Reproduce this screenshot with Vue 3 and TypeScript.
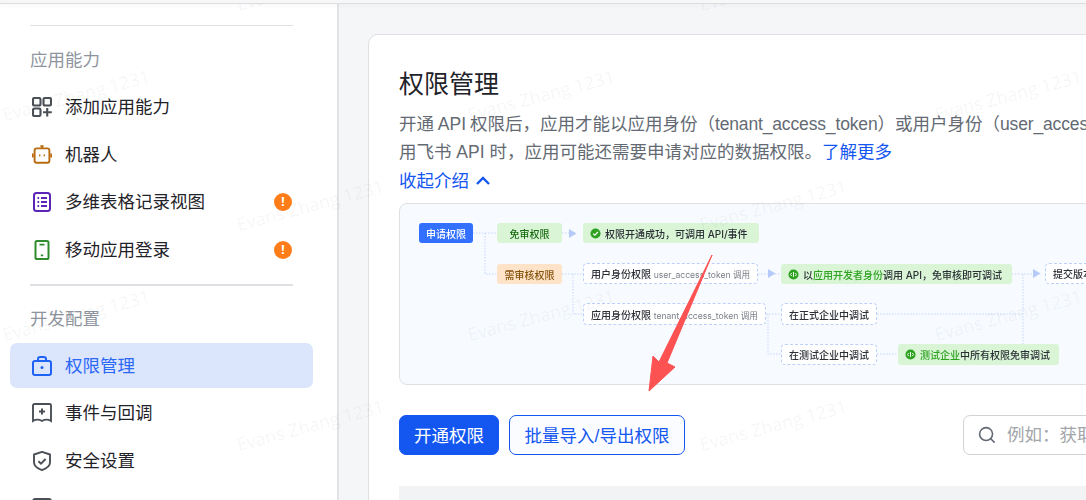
<script setup lang="ts">
interface Seg { t: string; c?: string }
interface DNode { x: number; y: number; w: number; h: number; cls: string; icon?: string; segs: Seg[] }

const wmarks: [number, number][] = [
  [76, 95], [541, 95], [1008, 95], [310, 205], [773, 205], [76, 315], [541, 315], [1008, 315],
  [310, 425], [773, 425], [773, -15], [310, -15],
]

function wmStyle(p: [number, number]) {
  return { left: `${p[0] - 90}px`, top: `${p[1] - 12}px` }
}

const nodes: DNode[] = [
  { x: 19, y: 19, w: 54, h: 20, cls: 'blue', segs: [{ t: '申请权限' }] },
  { x: 97, y: 19, w: 65, h: 20, cls: 'green center', segs: [{ t: '免审权限', c: 'dgreen' }] },
  { x: 183, y: 19, w: 176, h: 20, cls: 'green', icon: 'check', segs: [{ t: '权限开通成功，可调用 API/事件' }] },
  { x: 97, y: 60, w: 65, h: 20, cls: 'orange', segs: [{ t: '需审核权限' }] },
  { x: 183, y: 59, w: 175, h: 21, cls: 'dash', segs: [{ t: '用户身份权限 ' }, { t: 'user_access_token 调用', c: 'small' }] },
  { x: 183, y: 99, w: 183, h: 22, cls: 'dash', segs: [{ t: '应用身份权限 ' }, { t: 'tenant_access_token 调用', c: 'small' }] },
  { x: 381, y: 60, w: 231, h: 20, cls: 'green', icon: 'code', segs: [{ t: '以' }, { t: '应用开发者身份', c: 'lgreen' }, { t: '调用 API，免审核即可调试' }] },
  { x: 645, y: 59, w: 90, h: 21, cls: 'dash', segs: [{ t: '提交版本' }] },
  { x: 381, y: 99, w: 96, h: 22, cls: 'dash center', segs: [{ t: '在正式企业中调试' }] },
  { x: 381, y: 140, w: 96, h: 21, cls: 'dash center', segs: [{ t: '在测试企业中调试' }] },
  { x: 498, y: 140, w: 161, h: 21, cls: 'green', icon: 'code', segs: [{ t: '测试企业', c: 'lgreen' }, { t: '中所有权限免审调试' }] },
]

function nodeStyle(n: DNode) {
  return { left: `${n.x}px`, top: `${n.y}px`, width: `${n.w}px`, height: `${n.h}px` }
}

const lines: string[] = [
  'M73 29H97', 'M85 29V70H97', 'M162 29H169', 'M162 70H183', 'M173 70V110H183',
  'M358 70H368', 'M375 70H381', 'M366 110H381', 'M368 110V150H381', 'M612 70H633',
  'M477 110H623', 'M623 70V140', 'M477 150H498',
]
const triangles: [number, number][] = [[169, 25], [368, 65], [633, 65]]
</script>

<template>
  <div class="page">
    <div class="topbar"></div>
    <div class="body">
      <aside class="side">
        <div class="rule"></div>
        <div class="label first">应用能力</div>
        <div class="item">
          <svg class="ic" viewBox="0 0 20 20" fill="none" stroke="#4b5057" stroke-width="2.1">
            <rect x="1" y="1" width="7.5" height="7.5" rx="1.5" /><rect x="11.5" y="1" width="7.5" height="7.5" rx="1.5" />
            <rect x="1" y="11.5" width="7.5" height="7.5" rx="1.5" /><path d="M15.2 11v8.5M11 15.2h8.800" />
          </svg>
          <span>添加应用能力</span>
        </div>
        <div class="item">
          <svg class="ic" viewBox="0 0 20 20" fill="none" stroke="#b96b10" stroke-width="1.9">
            <rect x="2.6" y="3.400" width="14.800" height="14.400" rx="2" />
            <path d="M10 1v2.400M8.400 1.200h3.200" stroke-width="1.800" /><path d="M.7 8.500v4M19.300 8.500v4" stroke-width="2" />
            <path d="M7 10.400h1.400M11.600 10.400h1.400" stroke-width="1.900" />
          </svg>
          <span>机器人</span>
        </div>
        <div class="item">
          <svg class="ic" viewBox="0 0 20 20" fill="none" stroke="#5b26b5" stroke-width="2">
            <rect x="2" y="1" width="16" height="18" rx="2.500" />
            <path d="M5.500 6h1.600M9 6h6M5.500 10h1.600M9 10h6M5.500 14h1.600M9 14h6" stroke-width="1.900" />
          </svg>
          <span>多维表格记录视图</span>
          <i class="warn">!</i>
        </div>
        <div class="item">
          <svg class="ic" viewBox="0 0 20 20" fill="none" stroke="#2e8b2e" stroke-width="2">
            <rect x="3.500" y="1" width="13" height="18" rx="1.600" />
            <path d="M7.500 4.600h5M8.800 15.400h2.400" stroke-width="1.700" />
          </svg>
          <span>移动应用登录</span>
          <i class="warn">!</i>
        </div>
        <div class="rule thick"></div>
        <div class="label">开发配置</div>
        <div class="item active">
          <svg class="ic" viewBox="0 0 20 20" fill="none" stroke="#1f63f5" stroke-width="2">
            <rect x="1" y="5" width="18" height="14" rx="2" /><path d="M6 5V3.200C6 2 7 1 8.200 1h3.600C13 1 14 2 14 3.200V5" />
            <circle cx="10" cy="11.500" r="1.500" fill="#1f63f5" stroke="none" />
          </svg>
          <span>权限管理</span>
        </div>
        <div class="item">
          <svg class="ic" viewBox="0 0 20 20" fill="none" stroke="#4b5057" stroke-width="1.900">
            <path d="M2.500 1h15c.8 0 1.500.7 1.500 1.500V18c-3-1.800-6-1.800-9 0-3-1.800-6-1.800-9 0V2.500C1 1.700 1.700 1 2.500 1Z" />
            <path d="M10 5.600v6M7 8.600h6" stroke-width="2" />
          </svg>
          <span>事件与回调</span>
        </div>
        <div class="item">
          <svg class="ic" viewBox="0 0 20 20" fill="none" stroke="#4b5057" stroke-width="1.900">
            <path d="M10 .9l8 2.600v8c0 3.200-3.600 6-8 7.600-4.400-1.600-8-4.400-8-7.600v-8Z" stroke-linejoin="round" />
            <path d="M6.400 10.200l2.600 2.500 4.600-4.700" stroke-width="1.900" />
          </svg>
          <span>安全设置</span>
        </div>
        <div class="item">
          <svg class="ic" viewBox="0 0 20 20" fill="none" stroke="#4b5057" stroke-width="1.900">
            <rect x="1" y="1" width="18" height="18" rx="2" />
          </svg>
        </div>
      </aside>

      <main class="main">
        <section class="card">
          <h1 class="title">权限管理</h1>
          <p class="desc tight">开通 API 权限后，应用才能以应用身份（<span class="token">tenant_access_token</span>）或用户身份（<span class="token">user_access_token</span>）</p>
          <p class="desc">用飞书 API 时，应用可能还需要申请对应的数据权限。<a class="link">了解更多</a></p>
          <div class="collapse">
            <span>收起介绍</span>
            <svg width="16" height="10" viewBox="0 0 16 10" fill="none" stroke="#1456f0" stroke-width="2.400">
              <path d="M2 8l6-6 6 6" />
            </svg>
          </div>

          <div class="diagram">
            <svg class="wires" width="700" height="180" fill="none" stroke="#c6d6fb" stroke-width="1" stroke-dasharray="1.500 1.500">
              <path v-for="d in lines" :key="d" :d="d" />
            </svg>
            <svg class="wires" width="700" height="180">
              <path v-for="p in triangles" :key="p[0]" :d="`M${p[0]} ${p[1]}l7.500 4.500-7.500 4.500Z`" fill="#b5caf9" />
            </svg>
            <div v-for="n in nodes" :key="n.segs[0].t" class="node" :class="n.cls" :style="nodeStyle(n)">
              <svg v-if="n.icon === 'check'" class="nic" viewBox="0 0 12 12">
                <circle cx="6" cy="6" r="5.500" fill="#2ea121" />
                <path d="M3.400 6.100l1.900 1.800 3.300-3.500" fill="none" stroke="#fff" stroke-width="1.300" />
              </svg>
              <svg v-if="n.icon === 'code'" class="nic" viewBox="0 0 12 12">
                <circle cx="6" cy="6" r="5.500" fill="#2ea121" />
                <path d="M4.200 4.200L2.700 6l1.500 1.800M7.800 4.200L9.300 6 7.800 7.800M6 3.400v5.200" fill="none" stroke="#fff" stroke-width="1" />
              </svg>
              <span class="ntext"><span v-for="s in n.segs" :key="s.t" :class="s.c">{{ s.t }}</span></span>
            </div>
          </div>

          <div class="actions">
            <button class="btn primary" type="button">开通权限</button>
            <button class="btn outline" type="button">批量导入/导出权限</button>
            <label class="search">
              <svg width="20" height="20" viewBox="0 0 20 20" fill="none" stroke="#646a73" stroke-width="1.800">
                <circle cx="9" cy="9" r="7.200" /><path d="M14.200 14.200l4.300 4.300" />
              </svg>
              <input placeholder="例如：获取" />
            </label>
          </div>
          <div class="thead"></div>
        </section>
      </main>
    </div>

    <svg class="arrow" width="1086" height="500" viewBox="0 0 1086 500">
      <path d="M712 255L667 363 675 367 649 391 653 356 659 362Z" fill="#fd5252" stroke="#fd5252" stroke-width="1" stroke-linejoin="round" />
    </svg>
    <span v-for="(p, i) in wmarks" :key="i" class="wm" :style="wmStyle(p)">Evans Zhang 1231</span>
  </div>
</template>

<style>
html, body { margin: 0; background: #fff; }
</style>

<style scoped>
.page {
  position: relative;
  width: 1086px;
  height: 500px;
  overflow: hidden;
  display: flex;
  flex-direction: column;
  font-family: "Liberation Sans", "Noto Sans CJK SC", sans-serif;
  font-size: 17.5px;
  color: #1f2329;
}
.topbar {
  flex: none;
  height: 3px;
  background: #f7f7f8;
  border-bottom: 1px solid #dcdde0;
  box-shadow: 0 2px 5px rgba(0, 0, 0, .03);
  position: relative;
  z-index: 1;
}
.body { flex: 1; display: flex; min-height: 0; }
.side {
  flex: none;
  width: 339px;
  box-sizing: border-box;
  border-right: 2px solid #e2e3e5;
  background: #fff;
  padding: 21px 0 0 10px;
}
.rule { width: 263px; height: 1px; margin-left: 20px; background: #dee0e3; }
.rule.thick { height: 2px; margin-top: 12px; }
.label { margin: 19px 0 10px 20px; line-height: 28px; color: #8f959e; }
.label.first { margin-top: 20px; margin-bottom: 10.5px; }
.item {
  width: 303px;
  height: 45px;
  margin-bottom: 2.5px;
  padding-left: 22px;
  padding-right: 21px;
  box-sizing: border-box;
  display: flex;
  align-items: center;
  border-radius: 7px;
  line-height: 1;
}
.item > span { flex: 1; margin-left: 13px; margin-top: 2px; }
.item .ic { width: 20px; height: 20px; flex: none; }
.item.active { background: #dbe6fc; color: #2b68f6; }
.warn {
  width: 18px;
  height: 18px;
  border-radius: 50%;
  background: #ff7d19;
  color: #fff;
  font: 700 12px/18px "Noto Sans", sans-serif;
  text-align: center;
}
.main { flex: 1; min-width: 0; background: #f5f6f7; padding: 30px 0 0 29px; }
.card {
  box-sizing: border-box;
  width: 900px;
  height: 600px;
  background: #fff;
  border: 1px solid #dee0e3;
  border-radius: 10px;
  padding: 32px 30px 0;
}
.title { margin: 0 0 9px; font-size: 25px; line-height: 34px; font-weight: 400; color: #1f2329; }
.desc { margin: 0; line-height: 28px; color: #646a73; white-space: nowrap; }
.desc.tight { word-spacing: -1px; }
.token { letter-spacing: -.15px; }
.link { color: #1456f0; }
.collapse {
  display: flex;
  align-items: center;
  gap: 6px;
  margin-top: 1px;
  line-height: 28px;
  color: #1456f0;
}
.diagram {
  position: relative;
  margin-top: 8px;
  height: 182px;
  box-sizing: border-box;
  border: 1px solid #dee0e3;
  border-radius: 8px;
  background: #f7fbff;
  overflow: hidden;
}
.wires { position: absolute; left: 0; top: 0; filter: blur(.3px); }
.node {
  position: absolute;
  box-sizing: border-box;
  display: flex;
  align-items: center;
  padding-left: 7px;
  border-radius: 3px;
  font-family: Inter, "Noto Sans CJK SC", sans-serif;
  font-size: 10px;
  font-weight: 500;
  white-space: nowrap;
  color: #2b2f36;
  filter: blur(.3px);
}
.node.center { justify-content: center; padding-left: 0; }
.node.blue { background: #3370ff; color: #fff; justify-content: center; padding-left: 0; }
.node.green { background: #d9f5d6; }
.node.orange { background: #fee3c8; color: #86530d; justify-content: center; padding-left: 0; }
.node.dash { background: #fff; border: 1px dashed #bcd0fb; border-radius: 4px; }
.nic { width: 11px; height: 11px; margin-right: 4px; flex: none; }
.small { font-size: 8.6px; font-weight: 400; color: #7a7f87; }
.dgreen { color: #186c12; }
.lgreen { color: #2ea121; }
.actions { display: flex; align-items: center; gap: 10px; margin-top: 30px; height: 40px; }
.btn {
  flex: none;
  height: 40px;
  box-sizing: border-box;
  border-radius: 7px;
  font: inherit;
  padding: 0 0 1px;
}
.primary { width: 100px; background: #1456f0; border: 1px solid #1456f0; color: #fff; }
.outline { width: 176px; background: #fbfcff; border: 1px solid #1456f0; color: #1456f0; }
.search {
  margin-left: 268px;
  width: 300px;
  height: 40px;
  box-sizing: border-box;
  border: 1px solid #d0d3d6;
  border-radius: 7px;
  display: flex;
  align-items: center;
  gap: 11px;
  padding-left: 14px;
  flex: none;
}
.search input {
  border: 0;
  outline: 0;
  padding: 0;
  background: none;
  width: 100%;
  font: inherit;
}
.search input::placeholder { color: #a2a5aa; opacity: 1; }
.thead { margin-top: 31px; height: 60px; background: #f2f3f5; }
.arrow { position: absolute; left: 0; top: 0; pointer-events: none; }
.wm {
  position: absolute;
  width: 180px;
  text-align: center;
  font-family: "Open Sans", sans-serif;
  font-size: 18px;
  line-height: 24px;
  color: rgba(0, 0, 0, .055);
  transform: rotate(-15deg);
  pointer-events: none;
  white-space: nowrap;
}
</style>
